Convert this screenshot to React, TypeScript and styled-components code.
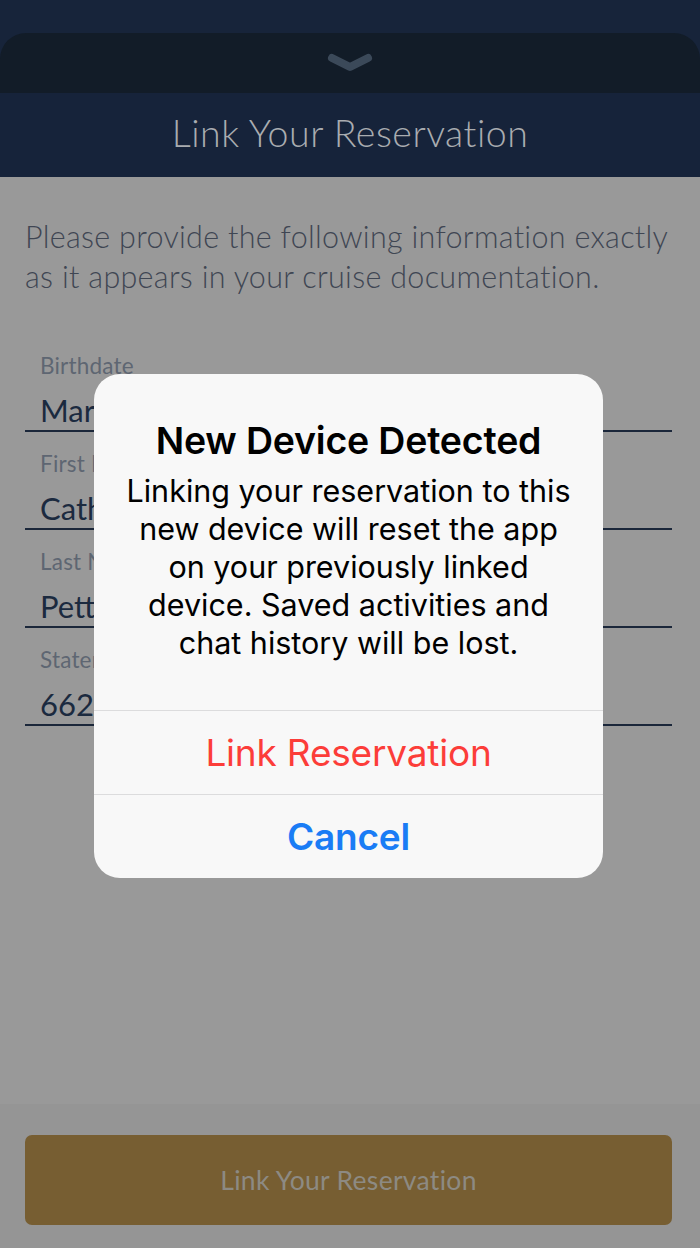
import React from "react";
import styled, { createGlobalStyle } from "styled-components";

const Global = createGlobalStyle`
  html, body { margin: 0; padding: 0; background: #17243a; }
  * { box-sizing: border-box; }
`;

const Screen = styled.div`
  position: relative;
  width: 700px;
  height: 1248px;
  display: flex;
  flex-direction: column;
  background: #17243a;
  overflow: hidden;
`;

const TopStrip = styled.div`
  height: 33px;
  flex: none;
`;

const Sheet = styled.div`
  flex: 1;
  display: flex;
  flex-direction: column;
  border-radius: 26px 26px 0 0;
  overflow: hidden;
`;

const Handle = styled.div`
  height: 60px;
  flex: none;
  background: #121c28;
  display: flex;
  align-items: center;
  justify-content: center;
`;

const Header = styled.div`
  height: 84px;
  flex: none;
  background: #16233a;
  display: flex;
  align-items: center;
  justify-content: center;
  padding-bottom: 5px;
`;

const HeaderTitle = styled.h1`
  margin: 0;
  font-family: "Lato", "Open Sans", sans-serif;
  font-weight: 300;
  font-size: 37.5px;
  letter-spacing: 0.5px;
  color: #a9acb0;
`;

const Body = styled.div`
  flex: 1;
  background: #999999;
  display: flex;
  flex-direction: column;
  padding: 39px 20px 0 25px;
`;

const Intro = styled.p`
  margin: 0;
  font-family: "Lato", "Open Sans", sans-serif;
  font-weight: 300;
  font-size: 30.5px;
  line-height: 40px;
  letter-spacing: 0.3px;
  color: #3f4653;
`;

const Fields = styled.div`
  display: flex;
  flex-direction: column;
  gap: 19px;
  margin-top: 57px;
  margin-right: 8px;
`;

const Field = styled.div`
  display: flex;
  flex-direction: column;
  border-bottom: 2px solid #1b273a;
  padding-left: 15px;
`;

const Label = styled.span`
  font-family: "Lato", "Open Sans", sans-serif;
  font-size: 22.5px;
  line-height: 26px;
  color: #5e6672;
  letter-spacing: 0.2px;
`;

const Value = styled.span`
  margin-top: 11px;
  font-family: "Lato", "Open Sans", sans-serif;
  font-size: 31px;
  line-height: 40px;
  color: #1b2a3f;
  white-space: nowrap;
`;

const Footer = styled.div`
  height: 144px;
  flex: none;
  background: #959595;
  padding: 31px 28px 23px 25px;
  display: flex;
`;

const PrimaryButton = styled.button`
  flex: 1;
  border: none;
  border-radius: 7px;
  background: #775e32;
  font-family: "Lato", "Open Sans", sans-serif;
  font-size: 26.5px;
  letter-spacing: 0.3px;
  color: #8d8a83;
  cursor: pointer;
`;

const Dialog = styled.div`
  position: absolute;
  left: 94px;
  top: 374px;
  width: 509px;
  background: #f8f8f8;
  border-radius: 26px;
  display: flex;
  flex-direction: column;
  overflow: hidden;
  font-family: "Inter", "Liberation Sans", sans-serif;
`;

const DialogContent = styled.div`
  padding: 47px 28px 48px;
  display: flex;
  flex-direction: column;
  align-items: center;
  gap: 11px;
  text-align: center;
`;

const DialogTitle = styled.h2`
  margin: 0;
  font-size: 37.5px;
  line-height: 40px;
  font-weight: 600;
  color: #000;
  letter-spacing: -0.2px;
`;

const DialogMessage = styled.p`
  margin: 0;
  font-size: 30.5px;
  line-height: 38px;
  font-weight: 400;
  color: #000;
  letter-spacing: 0px;
`;

const DialogAction = styled.button<{ $tone: "destructive" | "cancel" }>`
  height: 84px;
  border: none;
  border-top: 1px solid #dcdcdd;
  background: transparent;
  font-family: inherit;
  font-size: 37px;
  font-weight: ${(p) => (p.$tone === "cancel" ? 600 : 400)};
  color: ${(p) => (p.$tone === "cancel" ? "#1a7cf5" : "#fc3d39")};
  letter-spacing: -0.2px;
  cursor: pointer;
`;

const Chevron = () => (
  <svg width="46" height="20" viewBox="0 0 46 20">
    <path
      d="M5 5 L23 14 L41 5"
      fill="none"
      stroke="#3b4959"
      strokeWidth="8"
      strokeLinecap="round"
      strokeLinejoin="round"
    />
  </svg>
);

const fields = [
  { label: "Birthdate", value: "March 14, 1985" },
  { label: "First Name", value: "Catherine" },
  { label: "Last Name", value: "Pettersen" },
  { label: "Stateroom Number", value: "6620" },
];

export default function App() {
  return (
    <>
      <Global />
      <Screen>
        <TopStrip />
        <Sheet>
          <Handle>
            <Chevron />
          </Handle>
          <Header>
            <HeaderTitle>Link Your Reservation</HeaderTitle>
          </Header>
          <Body>
            <Intro>
              Please provide the following information exactly as it appears in your cruise documentation.
            </Intro>
            <Fields>
              {fields.map((f) => (
                <Field key={f.label}>
                  <Label>{f.label}</Label>
                  <Value>{f.value}</Value>
                </Field>
              ))}
            </Fields>
          </Body>
          <Footer>
            <PrimaryButton>Link Your Reservation</PrimaryButton>
          </Footer>
        </Sheet>
        <Dialog role="alertdialog">
          <DialogContent>
            <DialogTitle>New Device Detected</DialogTitle>
            <DialogMessage>
              Linking your reservation to this new device will reset the app on your previously linked device. Saved activities and chat history will be lost.
            </DialogMessage>
          </DialogContent>
          <DialogAction $tone="destructive">Link Reservation</DialogAction>
          <DialogAction $tone="cancel">Cancel</DialogAction>
        </Dialog>
      </Screen>
    </>
  );
}
